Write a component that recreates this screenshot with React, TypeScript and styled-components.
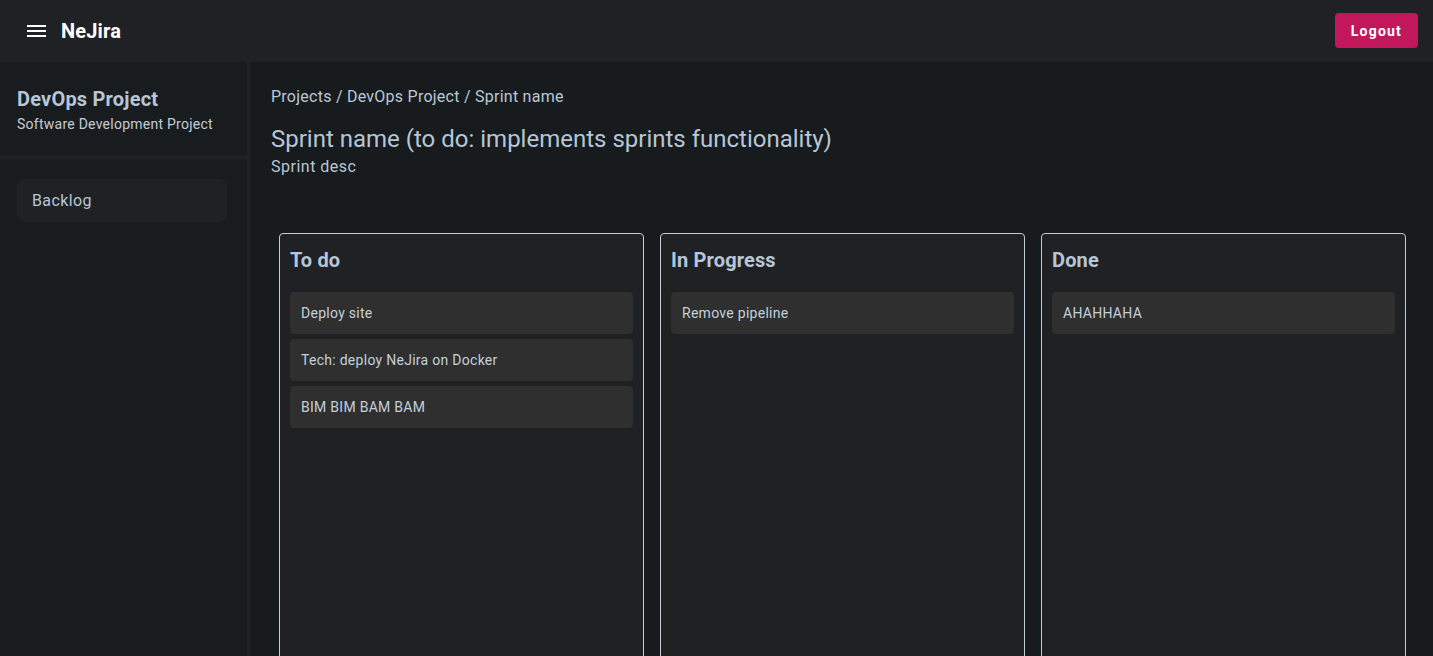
import React from "react";
import styled, { createGlobalStyle } from "styled-components";

const Global = createGlobalStyle`
  html, body { margin: 0; padding: 0; background: #181b1e; }
  body { font-family: Roboto, "Liberation Sans", sans-serif; overflow: hidden; }
  * { box-sizing: border-box; }
`;

const Page = styled.div`
  width: 1433px;
  height: 656px;
  display: flex;
  flex-direction: column;
  overflow: hidden;
  background: #181b1e;
`;

const TopBar = styled.header`
  height: 62px;
  flex: none;
  display: flex;
  align-items: center;
  justify-content: space-between;
  padding: 0 15px 0 27px;
  background: #1f2125;
`;

const Brand = styled.div`
  display: flex;
  align-items: center;
  gap: 15px;
`;

const MenuIcon = styled.div`
  width: 19px;
  display: flex;
  flex-direction: column;
  gap: 3px;
  span {
    display: block;
    height: 2px;
    background: #ffffff;
  }
`;

const Logo = styled.div`
  color: #ffffff;
  font-size: 20px;
  font-weight: 700;
  letter-spacing: 0.15px;
`;

const LogoutButton = styled.button`
  height: 35px;
  padding: 0 16px;
  border: none;
  border-radius: 4px;
  background: #c2185b;
  color: #ffffff;
  font-family: Roboto, "Liberation Sans", sans-serif;
  font-size: 14px;
  font-weight: 700;
  letter-spacing: 1.2px;
  margin-top: -1px;
`;

const Body = styled.div`
  flex: 1;
  display: flex;
  min-height: 0;
`;

const Sidebar = styled.aside`
  width: 250px;
  flex: none;
  background: #191c1f;
  border-right: 3px solid #1f2226;
  display: flex;
  flex-direction: column;
`;

const SideHeader = styled.div`
  padding: 25px 17px 22px;
  border-bottom: 3px solid #1f2226;
`;

const ProjectName = styled.div`
  color: #b6c6d6;
  font-size: 20px;
  font-weight: 700;
  line-height: 24px;
  letter-spacing: 0.2px;
`;

const ProjectType = styled.div`
  color: #c3ccd6;
  font-size: 14px;
  line-height: 20px;
  margin-top: 3px;
  letter-spacing: 0.25px;
`;

const NavList = styled.nav`
  padding: 20px 20px 0 17px;
`;

const NavItem = styled.div`
  height: 43px;
  border-radius: 8px;
  background: #1f2125;
  color: #b6c6d6;
  font-size: 16px;
  letter-spacing: 0.4px;
  display: flex;
  align-items: center;
  padding-left: 15px;
`;

const Main = styled.main`
  flex: 1;
  padding: 25px 21px 0;
  display: flex;
  flex-direction: column;
  min-width: 0;
`;

const Crumbs = styled.div`
  color: #b9c7d5;
  font-size: 16px;
  line-height: 19px;
  letter-spacing: 0.25px;
`;

const Title = styled.h1`
  margin: 19px 0 0;
  color: #b6c6d6;
  font-size: 24px;
  font-weight: 400;
  line-height: 28px;
`;

const Desc = styled.div`
  color: #b9c7d5;
  font-size: 16px;
  line-height: 20px;
  margin-top: 4px;
  letter-spacing: 0.5px;
`;

const Board = styled.div`
  margin-top: 56px;
  padding: 0 6px 0 8px;
  display: grid;
  grid-template-columns: repeat(3, 1fr);
  gap: 16px;
  align-items: start;
`;

const Column = styled.section`
  min-height: 520px;
  border: 1px solid #c3cbd4;
  border-radius: 4px;
  background: #1f2125;
  padding: 14px 10px 10px;
  display: flex;
  flex-direction: column;
`;

const ColumnTitle = styled.h2`
  margin: 0 0 20px;
  color: #b6c6d6;
  font-size: 20px;
  font-weight: 700;
  line-height: 24px;
  letter-spacing: 0.15px;
`;

const Cards = styled.div`
  display: flex;
  flex-direction: column;
  gap: 5px;
`;

const Card = styled.div`
  height: 42px;
  border-radius: 4px;
  background: #2f2f2f;
  color: #c2cfdc;
  font-size: 14px;
  letter-spacing: 0.28px;
  display: flex;
  align-items: center;
  padding-left: 11px;
`;

const columns = [
  { title: "To do", items: ["Deploy site", "Tech: deploy NeJira on Docker", "BIM BIM BAM BAM"] },
  { title: "In Progress", items: ["Remove pipeline"] },
  { title: "Done", items: ["AHAHHAHA"] },
];

export default function App() {
  return (
    <Page>
      <Global />
      <TopBar>
        <Brand>
          <MenuIcon>
            <span />
            <span />
            <span />
          </MenuIcon>
          <Logo>NeJira</Logo>
        </Brand>
        <LogoutButton>Logout</LogoutButton>
      </TopBar>
      <Body>
        <Sidebar>
          <SideHeader>
            <ProjectName>DevOps Project</ProjectName>
            <ProjectType>Software Development Project</ProjectType>
          </SideHeader>
          <NavList>
            <NavItem>Backlog</NavItem>
          </NavList>
        </Sidebar>
        <Main>
          <Crumbs>Projects / DevOps Project / Sprint name</Crumbs>
          <Title>Sprint name (to do: implements sprints functionality)</Title>
          <Desc>Sprint desc</Desc>
          <Board>
            {columns.map((c) => (
              <Column key={c.title}>
                <ColumnTitle>{c.title}</ColumnTitle>
                <Cards>
                  {c.items.map((i) => (
                    <Card key={i}>{i}</Card>
                  ))}
                </Cards>
              </Column>
            ))}
          </Board>
        </Main>
      </Body>
    </Page>
  );
}
